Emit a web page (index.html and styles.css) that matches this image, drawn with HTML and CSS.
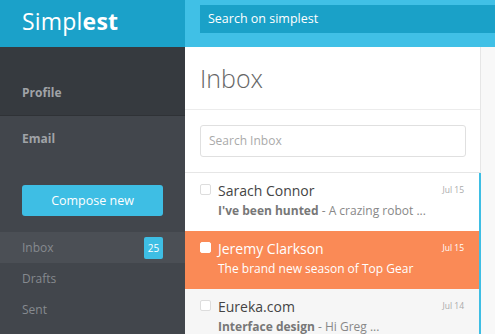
FILE: index.html
```html
<!DOCTYPE html>
<html>
<head>
<meta charset="utf-8">
<link rel="stylesheet" href="styles.css">
</head>
<body>
<div class="app">
  <div class="brand"><span class="light">Simpl</span><span class="bold">est</span></div>
  <div class="topbar">
    <div class="global-search">Search on simplest</div>
  </div>
  <aside class="sidebar">
    <div class="profile">Profile</div>
    <div class="email-section">
      <div class="section-title">Email</div>
      <button class="compose">Compose new</button>
      <nav class="nav">
        <div class="nav-item active"><span>Inbox</span><span class="badge">25</span></div>
        <div class="nav-item"><span>Drafts</span></div>
        <div class="nav-item"><span>Sent</span></div>
      </nav>
    </div>
  </aside>
  <main class="panel">
    <h1 class="title">Inbox</h1>
    <div class="search-wrap"><div class="search-input">Search Inbox</div></div>
    <ul class="list">
      <li class="mail">
        <span class="check"></span>
        <div class="mail-body">
          <div class="mail-head"><span class="name">Sarach Connor</span><span class="date">Jul 15</span></div>
          <div class="subject"><b>I've been hunted</b> - A crazing robot ...</div>
        </div>
      </li>
      <li class="mail selected">
        <span class="check"></span>
        <div class="mail-body">
          <div class="mail-head"><span class="name">Jeremy Clarkson</span><span class="date">Jul 15</span></div>
          <div class="subject">The brand new season of Top Gear</div>
        </div>
      </li>
      <li class="mail read">
        <span class="check"></span>
        <div class="mail-body">
          <div class="mail-head"><span class="name">Eureka.com</span><span class="date">Jul 14</span></div>
          <div class="subject"><b>Interface design</b> - Hi Greg ...</div>
        </div>
      </li>
    </ul>
  </main>
  <div class="aside-right"></div>
</div>
</body>
</html>
```
FILE: styles.css
```css
* { box-sizing: border-box; }
html, body { margin: 0; padding: 0; height: 100%; overflow: hidden; }
body { font-family: "Open Sans", "Liberation Sans", sans-serif; background: #f7f7f7; }
.app {
  display: grid;
  grid-template-columns: 185px 296px 1fr;
  grid-template-rows: 47px 1fr;
  height: 334px;
}
.brand {
  background: #1ba1c9;
  color: #fff;
  font-size: 23px;
  padding: 5px 0 0 22px;
  letter-spacing: 0.2px;
}
.brand .light { font-weight: 400; }
.brand .bold { font-weight: 700; }
.topbar {
  grid-column: 2 / 4;
  background: #40c0e6;
  padding: 5px 0 0 15px;
}
.global-search {
  background: #1aa1c8;
  height: 28px;
  color: #fff;
  font-size: 12.5px;
  line-height: 28px;
  padding-left: 8px;
}
.sidebar {
  background: #42464c;
  display: flex;
  flex-direction: column;
}
.profile {
  background: #363a3f;
  color: #a0a3a7;
  font-weight: 700;
  font-size: 12px;
  line-height: 16px;
  padding: 38px 22px 14px;
  border-bottom: 1px solid #2f3236;
}
.email-section { padding-top: 15px; }
.section-title {
  color: #a0a3a7;
  font-weight: 700;
  font-size: 12px;
  line-height: 16px;
  padding: 0 22px;
}
.compose {
  display: block;
  margin: 38px 0 0 22px;
  width: 141px;
  height: 31px;
  border: 0;
  border-radius: 3px;
  background: #3ebee4;
  color: #fff;
  font-family: inherit;
  font-size: 12.5px;
}
.nav { margin-top: 16px; }
.nav-item {
  height: 31px;
  display: flex;
  align-items: center;
  justify-content: space-between;
  padding: 0 22px;
  color: #868a8f;
  font-size: 12px;
}
.nav-item.active { background: #4b4f55; }
.badge {
  background: #3ebee4;
  color: #fff;
  font-size: 10px;
  width: 19px;
  height: 22px;
  display: flex;
  align-items: center;
  justify-content: center;
  border-radius: 2px;
}
.panel {
  background: #fff;
  border-right: 1px solid #e6e6e6;
  display: flex;
  flex-direction: column;
}
.title {
  margin: 0;
  font-weight: 300;
  font-size: 25px;
  color: #666;
  height: 63px;
  line-height: 63px;
  padding-left: 15px;
  border-bottom: 1px solid #ececec;
}
.search-wrap {
  padding: 15px 14px 15px 15px;
  border-bottom: 1px solid #e6e6e6;
}
.search-input {
  height: 32px;
  border: 1px solid #e0e0e0;
  border-radius: 3px;
  color: #aaa;
  font-size: 12px;
  line-height: 30px;
  padding-left: 8px;
}
.list {
  list-style: none;
  margin: 0;
  padding: 0;
  flex: 1;
  border-right: 2px solid #3ebee4;
  margin-right: -1px;
}
.mail {
  display: flex;
  height: 58px;
  padding: 10px 0 0 15px;
  background: #fff;
}
.check {
  width: 11px;
  height: 11px;
  border: 1px solid #ddd;
  border-radius: 2px;
  background: #fff;
  margin-top: 1px;
  flex: none;
}
.mail-body { flex: 1; padding-left: 7px; padding-right: 15px; }
.mail-head { display: flex; justify-content: space-between; height: 16px; }
.name { font-size: 14px; color: #444; line-height: 16px; }
.date { font-size: 8.5px; color: #aaa; line-height: 12px; padding-top: 1px; }
.subject { font-size: 12px; color: #888; margin-top: 4px; white-space: nowrap; line-height: 16px; }
.subject b { color: #777; font-weight: 700; }
.mail.selected { background: #fa8a56; }
.mail.selected .check { background: #fff; border-color: #fff; }
.mail.selected .name, .mail.selected .subject, .mail.selected .date { color: #fff; }
.mail.read { background: #f6f6f6; }
.aside-right { background: #f8f8f8; }
```
